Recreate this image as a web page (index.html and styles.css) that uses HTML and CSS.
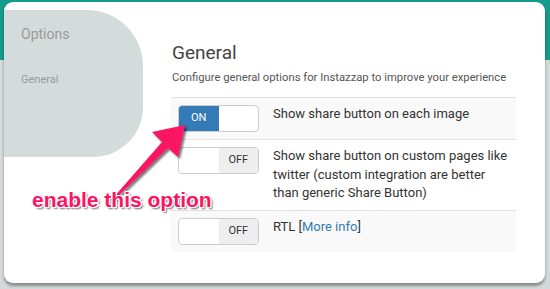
FILE: index.html
```html
<!DOCTYPE html>
<html lang="en">
<head>
    <meta charset="UTF-8">
    <meta name="viewport" content="width=device-width, initial-scale=1.0">
    <title>Options</title>
    <link rel="stylesheet" href="styles.css">
</head>
<body>
    <div class="card">
        <div class="sidebar">
            <div class="side-title">Options</div>
            <ul>
                <li><a href="#">General</a></li>
            </ul>
        </div>

        <div class="main-content">
            <h2>General</h2>
            <p class="desc">Configure general options for Instazzap to improve your experience</p>

            <table class="options">
                <tr>
                    <td class="switch-cell">
                        <div class="switch on"><span class="label-on">ON</span><span class="blank"></span></div>
                    </td>
                    <td>Show share button on each image</td>
                </tr>
                <tr>
                    <td class="switch-cell">
                        <div class="switch"><span class="blank"></span><span class="label-off">OFF</span></div>
                    </td>
                    <td>Show share button on custom pages like twitter (custom integration are better than generic Share Button)</td>
                </tr>
                <tr>
                    <td class="switch-cell">
                        <div class="switch"><span class="blank"></span><span class="label-off">OFF</span></div>
                    </td>
                    <td>RTL [<a href="#">More info</a>]</td>
                </tr>
            </table>
        </div>
    </div>

    <!-- annotation drawn over the screenshot -->
    <svg class="arrow" width="550" height="289" viewBox="0 0 550 289">
        <defs>
            <filter id="shade" x="-20%" y="-20%" width="140%" height="140%">
                <feDropShadow dx="2" dy="2" stdDeviation="1.2" flood-color="#000" flood-opacity="0.55"/>
            </filter>
        </defs>
        <polygon points="113,198 162,142 152,132 185,125 178,157 168,148 115,199" fill="#fb1464" filter="url(#shade)"/>
    </svg>
    <div class="callout">enable this option</div>
</body>
</html>
```

FILE: styles.css
```css
* {
    margin: 0;
    padding: 0;
    box-sizing: border-box;
}

body {
    font-family: Roboto, "Liberation Sans", sans-serif;
    color: #333;
    background: linear-gradient(to bottom, #139b8b 0, #139b8b 60px, #d3dad9 60px);
    height: 289px;
    overflow: hidden;
}

.card {
    display: flex;
    align-items: flex-start;
    margin: 2px 5px 0 4px;
    height: 281px;
    background-color: #fff;
    border-radius: 9px;
    box-shadow: 0 3px 3px rgba(0, 0, 0, 0.35);
}

.sidebar {
    width: 139px;
    height: 147px;
    margin-top: 8px;
    padding: 16px 0 0 17px;
    background-color: #d4dcdb;
    border-radius: 0 56px 50px 0;
}

.sidebar .side-title {
    font-size: 14px;
    line-height: 17px;
    color: #9a9a9a;
}

.sidebar ul {
    list-style-type: none;
    margin-top: 25px;
}

.sidebar ul li a {
    font-size: 11px;
    line-height: 14px;
    color: #9a9a9a;
    text-decoration: none;
}

.main-content {
    flex: 1;
    padding: 40px 29px 0 28px;
}

.main-content h2 {
    font-size: 19px;
    line-height: 22px;
    font-weight: 400;
    color: #444;
    padding-left: 1px;
}

.main-content .desc {
    font-size: 11.25px;
    line-height: 14px;
    color: #555;
    margin-top: 7px;
    padding-left: 1px;
}

.options {
    width: 100%;
    margin-top: 12px;
    border-collapse: collapse;
    font-size: 13px;
    line-height: 18.6px;
}

.options td {
    padding: 7px;
    border-top: 1px solid #e2e2e2;
    vertical-align: top;
}

.options tr:nth-child(odd) td {
    background-color: #f9f9f9;
}

.options td a {
    color: #337ab7;
    text-decoration: none;
}

.switch-cell {
    width: 95px;
}

.switch {
    display: flex;
    width: 81px;
    height: 27px;
    border: 1px solid #ccc;
    border-radius: 4px;
    overflow: hidden;
    background-color: #fff;
    font-size: 11px;
}

.switch span {
    display: flex;
    align-items: center;
    justify-content: center;
    width: 40px;
}

.switch .label-on {
    background-color: #337ab7;
    color: #fff;
}

.switch .label-off {
    background-color: #eee;
    color: #333;
}

.arrow {
    position: absolute;
    top: 0;
    left: 0;
}

.callout {
    position: absolute;
    left: 32px;
    top: 188px;
    font-family: "Liberation Sans", Arial, sans-serif;
    font-weight: bold;
    font-size: 21px;
    line-height: 24px;
    color: #fb1464;
    text-shadow:
        1px 0 0 #fff, -1px 0 0 #fff, 0 1px 0 #fff, 0 -1px 0 #fff,
        1px 1px 0 #fff, -1px -1px 0 #fff, 1px -1px 0 #fff, -1px 1px 0 #fff,
        2px 2px 2px rgba(0, 0, 0, 0.6);
}
```
